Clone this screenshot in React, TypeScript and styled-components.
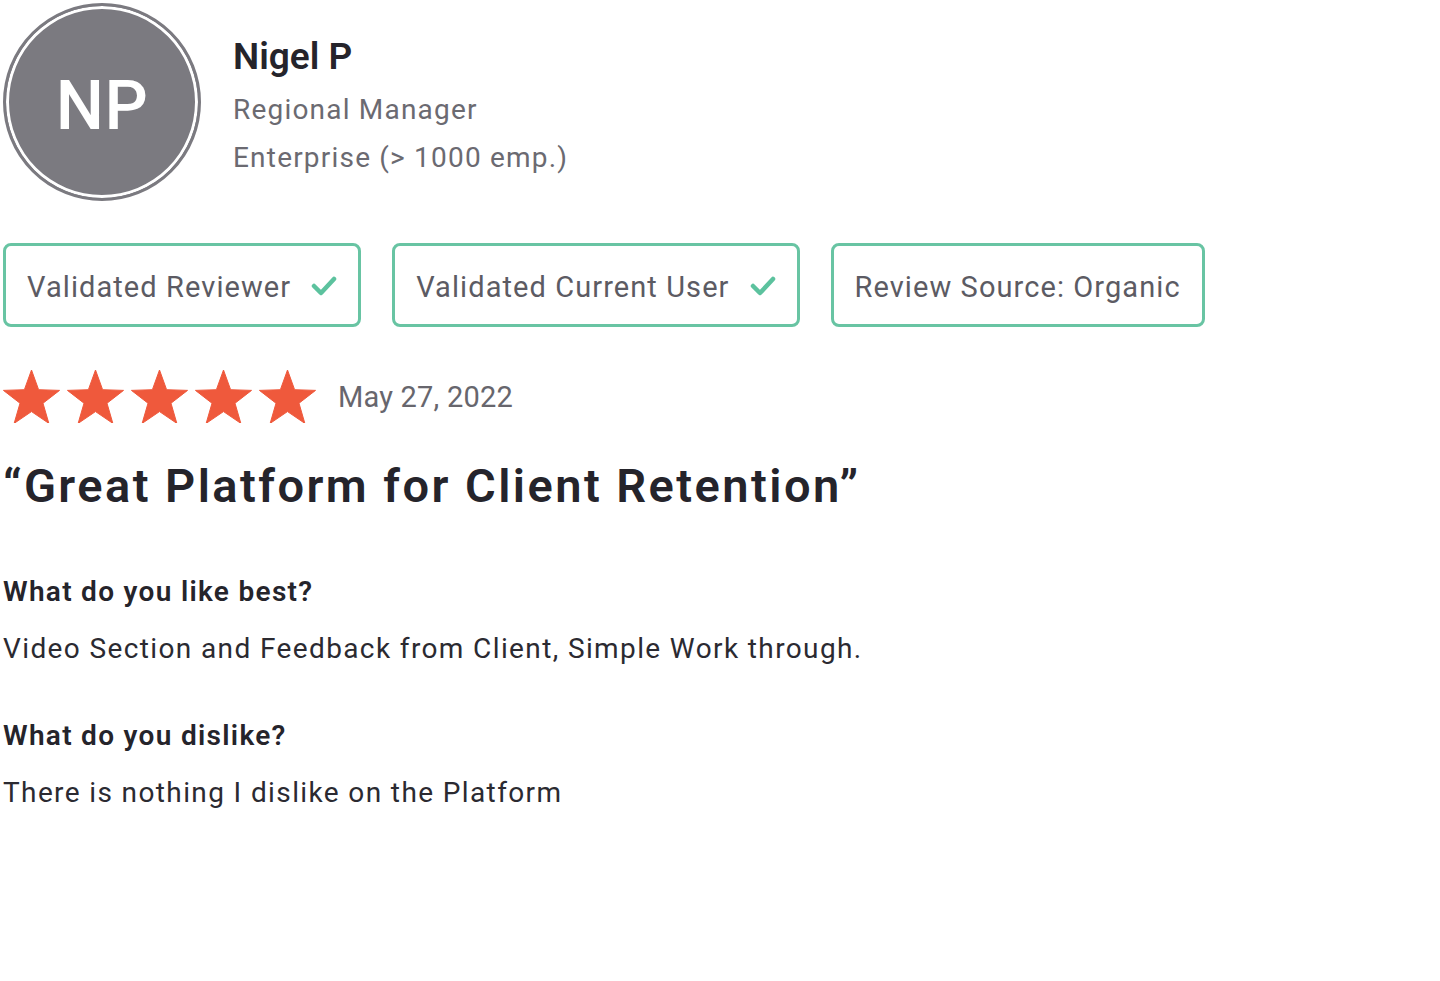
import React from "react";
import styled, { createGlobalStyle } from "styled-components";

const GlobalStyle = createGlobalStyle`
  html, body { margin: 0; padding: 0; background: #ffffff; }
  body { font-family: Roboto, "Liberation Sans", Arial, sans-serif; }
  * { box-sizing: border-box; }
`;

const Page = styled.div`
  padding: 3px 0 0 3px;
  display: flex;
  flex-direction: column;
`;

const Header = styled.div`
  display: flex;
  align-items: flex-start;
  gap: 32px;
`;

const Avatar = styled.div`
  width: 198px;
  height: 198px;
  border-radius: 50%;
  background: #7b7a80;
  border: 3px solid #7b7a80;
  box-shadow: inset 0 0 0 3px #ffffff;
  display: flex;
  align-items: center;
  justify-content: center;
  padding-top: 7px;
  color: #ffffff;
  font-size: 68px;
  font-weight: 500;
  letter-spacing: 0.5px;
`;

const Info = styled.div`
  display: flex;
  flex-direction: column;
  padding-top: 28px;
`;

const Name = styled.div`
  font-size: 37px;
  line-height: 52px;
  font-weight: 600;
  color: #25242b;
  margin-bottom: 3px;
`;

const Meta = styled.div`
  font-size: 28px;
  line-height: 48px;
  color: #6b6a71;
  letter-spacing: 1.2px;
`;

const Badges = styled.div`
  display: flex;
  gap: 31px;
  margin-top: 42px;
`;

const Badge = styled.div`
  height: 84px;
  border: 3px solid #68c4a3;
  border-radius: 8px;
  padding: 3px 21px 0;
  display: flex;
  align-items: center;
  gap: 20px;
  font-size: 29px;
  color: #5c5b63;
  letter-spacing: 1.08px;
  white-space: nowrap;
`;

const RatingRow = styled.div`
  display: flex;
  align-items: center;
  margin-top: 43px;
  height: 53px;
`;

const Stars = styled.div`
  display: flex;
  gap: 7px;
  margin-right: 22px;
`;

const DateText = styled.div`
  font-size: 29px;
  color: #67666d;
  letter-spacing: 0.2px;
`;

const Title = styled.h1`
  margin: 33px 0 56px;
  font-size: 47px;
  line-height: 60px;
  font-weight: 600;
  color: #25242b;
  letter-spacing: 2.45px;
`;

const Section = styled.div`
  display: flex;
  flex-direction: column;
  & + & {
    margin-top: 47px;
  }
`;

const Question = styled.div`
  font-size: 28px;
  line-height: 40px;
  font-weight: 600;
  color: #25242b;
  letter-spacing: 1.3px;
  margin-bottom: 17px;
`;

const Answer = styled.div`
  font-size: 28px;
  line-height: 40px;
  color: #2b2a31;
  letter-spacing: 1.38px;
`;

const Check = () => (
  <svg width="26" height="22" viewBox="0 0 26 22" fill="none">
    <path d="M3 10 L10 17 L23 3" stroke="#5cc29e" strokeWidth="4.5" strokeLinecap="round" strokeLinejoin="round" />
  </svg>
);

const starPoints = (() => {
  const cx = 28.5;
  const cy = 29.5;
  const R = 29.5;
  const r = R * 0.41;
  const pts: string[] = [];
  for (let i = 0; i < 10; i++) {
    const a = (-90 + i * 36) * (Math.PI / 180);
    const rad = i % 2 === 0 ? R : r;
    pts.push(`${(cx + rad * Math.cos(a)).toFixed(2)},${(cy + rad * Math.sin(a)).toFixed(2)}`);
  }
  return pts.join(" ");
})();

const Star = () => (
  <svg width="57" height="53" viewBox="0 0 57 53">
    <polygon points={starPoints} fill="#ef593c" stroke="#ef593c" strokeWidth="1" strokeLinejoin="round" />
  </svg>
);

export default function App() {
  return (
    <>
      <GlobalStyle />
      <Page>
        <Header>
          <Avatar>NP</Avatar>
          <Info>
            <Name>Nigel P</Name>
            <Meta>Regional Manager</Meta>
            <Meta>Enterprise (&gt; 1000 emp.)</Meta>
          </Info>
        </Header>
        <Badges>
          <Badge>
            Validated Reviewer
            <Check />
          </Badge>
          <Badge>
            Validated Current User
            <Check />
          </Badge>
          <Badge>Review Source: Organic</Badge>
        </Badges>
        <RatingRow>
          <Stars>
            {[0, 1, 2, 3, 4].map((i) => (
              <Star key={i} />
            ))}
          </Stars>
          <DateText>May 27, 2022</DateText>
        </RatingRow>
        <Title>“Great Platform for Client Retention”</Title>
        <Section>
          <Question>What do you like best?</Question>
          <Answer>Video Section and Feedback from Client, Simple Work through.</Answer>
        </Section>
        <Section>
          <Question>What do you dislike?</Question>
          <Answer>There is nothing I dislike on the Platform</Answer>
        </Section>
      </Page>
    </>
  );
}
